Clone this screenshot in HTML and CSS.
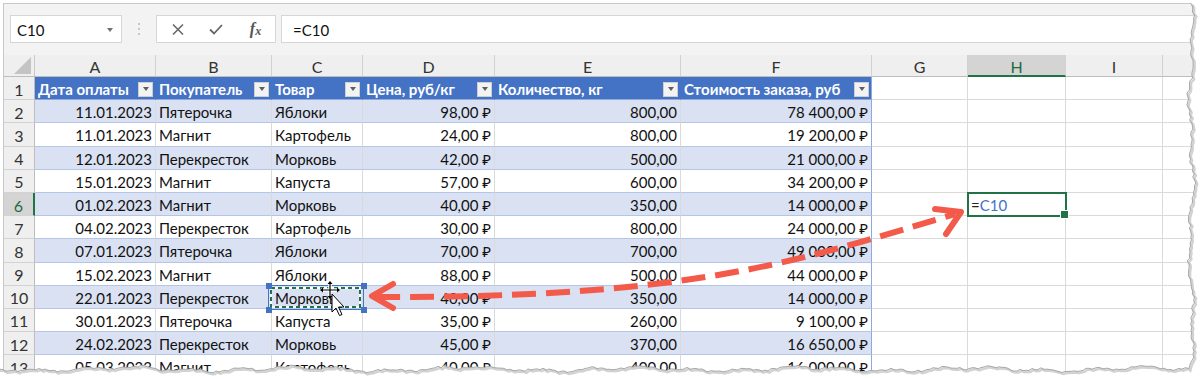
FILE: index.html
```html
<!DOCTYPE html>
<html lang="ru">
<head>
	<meta charset="UTF-8">
	<title>Ссылка на ячейку</title>
	<link rel="stylesheet" href="styles.css">
</head>
<body>
	<div class="frame">
		<div class="formulaBar">
			<div class="nameBox">
				<span>C10</span>
				<span class="nameArrow"></span>
			</div>
			<div class="barDots">
				<svg width="4" height="14" viewBox="0 0 4 14"><circle cx="2" cy="2" r="1" fill="#b9b9b9"/><circle cx="2" cy="7" r="1" fill="#b9b9b9"/><circle cx="2" cy="12" r="1" fill="#b9b9b9"/></svg>
			</div>
			<div class="barButtons">
				<span class="barBtn">
					<svg width="12" height="11" viewBox="0 0 12 11"><path d="M1 0.5 L11 10.5 M11 0.5 L1 10.5" stroke="#666" stroke-width="1.5" fill="none"/></svg>
				</span>
				<span class="barBtn">
					<svg width="14" height="11" viewBox="0 0 14 11"><path d="M1 5.5 L5 9.5 L13 1" stroke="#666" stroke-width="1.8" fill="none"/></svg>
				</span>
				<span class="barBtn fx">f<span class="fxSub">x</span></span>
			</div>
			<div class="formulaInput">=C10</div>
		</div>
		<div class="sheet" id="sheet"></div>
	</div>

	<svg class="overlay" width="1200" height="379" viewBox="0 0 1200 379">
		<!-- range finder around C10 -->
		<rect x="268.5" y="285.5" width="95" height="24" fill="none" stroke="#4472c4" stroke-width="1"/>
		<rect x="271" y="288" width="89" height="19" fill="none" stroke="#fff" stroke-width="2"/>
		<rect x="271" y="288" width="89" height="19" fill="none" stroke="#217346" stroke-width="2" stroke-dasharray="4 3"/>
		<rect x="266" y="283" width="6" height="6" fill="#4472c4"/>
		<rect x="361" y="283" width="6" height="6" fill="#4472c4"/>
		<rect x="266" y="307" width="6" height="6" fill="#4472c4"/>
		<rect x="361" y="307" width="6" height="6" fill="#4472c4"/>

		<!-- mouse cursors -->
		<g transform="translate(330 290)">
			<path d="M0 -8 L0 8 M-9 0 L9 0" stroke="#fff" stroke-width="3.5"/>
			<path d="M0 -8 L0 8 M-9 0 L9 0" stroke="#000" stroke-width="1.2"/>
			<path d="M0 -9 L-2.5 -6 L2.5 -6 Z M0 9 L-2.5 6 L2.5 6 Z M-10 0 L-7 -2.5 L-7 2.5 Z M10 0 L7 -2.5 L7 2.5 Z" fill="#000"/>
		</g>
		<path d="M332 294 L332 312 L336 308 L339.5 315.5 L342 314.5 L338.5 307 L344 307 Z" fill="#fff" stroke="#000" stroke-width="1" stroke-linejoin="round"/>

		<!-- red dashed arrow -->
		<path d="M376 297 C700 298, 800 260, 955 214" fill="none" stroke="#f35a4a" stroke-width="6" stroke-dasharray="24 10"/>
		<path d="M393 284 L372 296 L393 308" fill="none" stroke="#f35a4a" stroke-width="6" stroke-linecap="round" stroke-linejoin="round"/>
		<path d="M935 209 L961 212 L946 234" fill="none" stroke="#f35a4a" stroke-width="6" stroke-linecap="round" stroke-linejoin="round"/>

		<!-- torn paper edge -->
		<path id="tornFill" fill="#fff"/>
		<path id="tornShadow" fill="none" stroke="#d2d2d2" stroke-width="2.5" transform="translate(1.5 1.5)"/>
		<path id="tornLine" fill="none" stroke="#a8a8a8" stroke-width="1"/>
	</svg>

<script type="text/javascript">

	// table data
	let heads = ["Дата оплаты", "Покупатель", "Товар", "Цена, руб/кг", "Количество, кг", "Стоимость заказа, руб"];
	let rows = [
		["11.01.2023", "Пятерочка", "Яблоки", "98,00 ₽", "800,00", "78 400,00 ₽"],
		["11.01.2023", "Магнит", "Картофель", "24,00 ₽", "800,00", "19 200,00 ₽"],
		["12.01.2023", "Перекресток", "Морковь", "42,00 ₽", "500,00", "21 000,00 ₽"],
		["15.01.2023", "Магнит", "Капуста", "57,00 ₽", "600,00", "34 200,00 ₽"],
		["01.02.2023", "Магнит", "Морковь", "40,00 ₽", "350,00", "14 000,00 ₽"],
		["04.02.2023", "Перекресток", "Картофель", "30,00 ₽", "800,00", "24 000,00 ₽"],
		["07.01.2023", "Пятерочка", "Яблоки", "70,00 ₽", "700,00", "49 000,00 ₽"],
		["15.02.2023", "Магнит", "Яблоки", "88,00 ₽", "500,00", "44 000,00 ₽"],
		["22.01.2023", "Перекресток", "Морковь", "40,00 ₽", "350,00", "14 000,00 ₽"],
		["30.01.2023", "Пятерочка", "Капуста", "35,00 ₽", "260,00", "9 100,00 ₽"],
		["24.02.2023", "Перекресток", "Морковь", "45,00 ₽", "370,00", "16 650,00 ₽"],
		["05.03.2023", "Магнит", "Картофель", "40,00 ₽", "400,00", "16 000,00 ₽"]
	];
	// last column sits under the torn edge, so its letter is left out
	let letters = ["A", "B", "C", "D", "E", "F", "G", "H", "I", ""];
	let numCols = [0, 3, 4, 5];
	let sheet = document.getElementById("sheet");

	function addCell(cls, html) {
		let cell = document.createElement("div");
		cell.className = "cell " + cls;
		cell.innerHTML = html;
		sheet.appendChild(cell);
		return cell;
	}

	// column headers
	addCell("corner", "");
	letters.forEach(function(l) {
		addCell(l == "H" ? "colHead sel" : "colHead", l);
	});

	// table header row
	addCell("rowHead", "1");
	heads.forEach(function(h, i) {
		addCell(i == 5 ? "th lastCol" : "th", "<span>" + h + "</span><span class=\"filter\"></span>");
	});
	for (let i = 0; i < 4; i++) addCell("", "");

	// body rows
	rows.forEach(function(r, n) {
		let rowNum = n + 2;
		let band = rowNum % 2 == 0 ? " band" : "";
		addCell(rowNum == 6 ? "rowHead sel" : "rowHead", rowNum);
		r.forEach(function(v, i) {
			let cls = "td" + band;
			if (numCols.indexOf(i) > -1) cls += " num";
			if (i == 5) cls += " lastCol";
			addCell(cls, v.replace(/ /g, "\u00a0"));
		});
		addCell("", "");
		if (rowNum == 6) {
			addCell("formula", "<span class=\"eq\">=</span><span class=\"ref\">C10</span>");
		} else {
			addCell("", "");
		}
		addCell("", "");
		addCell("", "");
	});

	// torn edge on the right and bottom
	let seed = 11;
	function rnd() {
		seed = (seed * 16807) % 2147483647;
		return seed / 2147483647;
	}
	let pts = [];
	for (let y = 3; y <= 369; y += 3) {
		pts.push([1191 + Math.sin(y / 9) * 1.8 + Math.sin(y / 23) * 1.7 + (rnd() - 0.5) * 2.6, y]);
	}
	for (let x = 1188; x >= -3; x -= 3) {
		pts.push([x, 369 + Math.sin(x / 8) * 1.4 + Math.sin(x / 27) * 1.6 + (rnd() - 0.5) * 2.2]);
	}
	let line = pts.map(function(p, i) {
		return (i == 0 ? "M" : "L") + p[0].toFixed(1) + " " + p[1].toFixed(1);
	}).join(" ");
	document.getElementById("tornLine").setAttribute("d", line);
	document.getElementById("tornShadow").setAttribute("d", line);
	document.getElementById("tornFill").setAttribute("d", "M1200 0 L1191 0 " + line.replace("M", "L") + " L-3 379 L1200 379 Z");

</script>
</body>
</html>
```

FILE: styles.css
```css
* {
	margin: 0;
	padding: 0;
	box-sizing: border-box;
}

body {
	width: 1200px;
	height: 379px;
	overflow: hidden;
	position: relative;
	background: #fff;
	font-family: Lato, "Noto Sans", sans-serif;
	font-size: 15px;
	color: #111;
}

.frame {
	margin: 3px 0 0 3px;
	height: 376px;
	border-top: 1px solid #c8c8c8;
	border-left: 1px solid #c8c8c8;
	background: #f3f3f3;
	overflow: hidden;
}

/* formula bar */
.formulaBar {
	display: flex;
	padding: 11px 0 12px 6px;
}

.nameBox {
	width: 112px;
	height: 28px;
	display: flex;
	align-items: center;
	justify-content: space-between;
	padding: 1px 8px 0 6px;
	background: #fff;
	border: 1px solid #d6d6d6;
}

.nameArrow {
	border-left: 3.5px solid transparent;
	border-right: 3.5px solid transparent;
	border-top: 4px solid #707070;
}

.barDots {
	width: 34px;
	display: flex;
	align-items: center;
	justify-content: center;
}

.barButtons {
	width: 120px;
	height: 28px;
	display: flex;
	align-items: center;
	padding: 0 2px;
	background: #fff;
	border: 1px solid #d6d6d6;
}

.barBtn {
	width: 38px;
	display: flex;
	justify-content: center;
	align-items: center;
}

.fx {
	align-items: baseline;
	font-family: "Liberation Serif", serif;
	font-style: italic;
	font-weight: 700;
	font-size: 16px;
	color: #555;
	padding-left: 3px;
}

.fxSub {
	font-size: 12px;
	position: relative;
	top: 1px;
}

.formulaInput {
	flex: 1;
	height: 28px;
	margin-left: 5px;
	display: flex;
	align-items: center;
	padding: 1px 0 0 11px;
	background: #fff;
	border: 1px solid #d6d6d6;
}

/* grid */
.sheet {
	display: grid;
	grid-template-columns: 31px 121px 116px 91px 132px 186px 191px 96px 98px 97px 60px;
	grid-template-rows: 22px repeat(13, 23.2px);
}

.cell {
	display: flex;
	align-items: center;
	padding: 2px 3px 0 3px;
	white-space: nowrap;
	overflow: hidden;
	background: #fff;
	border-right: 1px solid #dadada;
	border-bottom: 1px solid #dadada;
}

.corner {
	background: #efefef;
	border-right: 1px solid #c9c9c9;
	border-bottom: 1px solid #bdbdbd;
	justify-content: flex-end;
	align-items: flex-end;
	padding: 0 3px 2px 0;
}

.corner::after {
	content: "";
	width: 17px;
	height: 17px;
	background: #c4c4c4;
	clip-path: polygon(100% 0, 100% 100%, 0 100%);
}

.colHead {
	background: #efefef;
	justify-content: center;
	font-size: 16px;
	color: #333;
	border-right: 1px solid #d2d2d2;
	border-bottom: 1px solid #bdbdbd;
}

.colHead.sel {
	background: #d4d4d4;
	color: #1e6b41;
	border-bottom: 2px solid #217346;
}

.rowHead {
	background: #efefef;
	justify-content: center;
	padding: 2px 0 0 0;
	font-size: 16px;
	color: #333;
	border-right: 1px solid #bdbdbd;
	border-bottom: 1px solid #d2d2d2;
}

.rowHead.sel {
	background: #d4d4d4;
	color: #1e6b41;
	border-right: 2px solid #217346;
}

.th {
	background: #4472c4;
	color: #fff;
	font-weight: 700;
	justify-content: space-between;
	padding-right: 2px;
	border-right: 1px solid #4472c4;
	border-bottom: 1px solid #8ea9db;
}

.filter {
	flex-shrink: 0;
	width: 15px;
	height: 15px;
	display: flex;
	align-items: center;
	justify-content: center;
	background: #f3f3f3;
	border: 1px solid #cfcfcf;
}

.filter::after {
	content: "";
	border-left: 3.5px solid transparent;
	border-right: 3.5px solid transparent;
	border-top: 4px solid #5e5e5e;
}

.td {
	border-bottom: 1px solid #b4c6e7;
}

.band {
	background: #d9e1f2;
}

.num {
	justify-content: flex-end;
}

.lastCol {
	border-right: 1px solid #8ea9db;
}

.formula {
	position: relative;
	z-index: 1;
	overflow: visible;
	outline: 2px solid #217346;
	outline-offset: -1px;
}

.formula::after {
	content: "";
	position: absolute;
	right: -4px;
	bottom: -4px;
	width: 7px;
	height: 7px;
	background: #217346;
	border: 1px solid #fff;
}

.eq {
	color: #222;
}

.ref {
	color: #4472c4;
}

.overlay {
	position: absolute;
	left: 0;
	top: 0;
	pointer-events: none;
}
```
